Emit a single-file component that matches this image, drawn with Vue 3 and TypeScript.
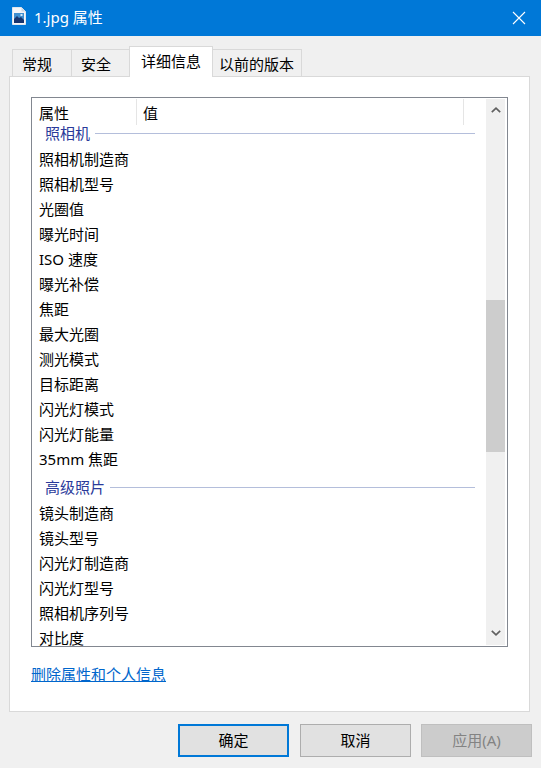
<script setup lang="ts">
const tabs = [
  { label: '常规', cls: 'tab-a' },
  { label: '安全', cls: 'tab-b' },
  { label: '详细信息', cls: 'tab-active' },
  { label: '以前的版本', cls: 'tab-d' },
]
const groups = [
  {
    title: '照相机',
    cls: 'group-first',
    rows: ['照相机制造商', '照相机型号', '光圈值', '曝光时间', 'ISO 速度', '曝光补偿', '焦距', '最大光圈', '测光模式', '目标距离', '闪光灯模式', '闪光灯能量', '35mm 焦距'],
  },
  {
    title: '高级照片',
    cls: 'group-next',
    rows: ['镜头制造商', '镜头型号', '闪光灯制造商', '闪光灯型号', '照相机序列号', '对比度'],
  },
]
</script>

<template>
  <div class="win">
    <header class="titlebar">
      <svg class="file-icon" width="16" height="20" viewBox="0 0 16 20">
        <path d="M1.5 1.5h9l4 4v13h-13z" fill="#f4f6f9" stroke="#dfe6ee" />
        <path d="M10.5 1.5v4h4" fill="#cfd8e3" />
        <rect x="3" y="7" width="10" height="10" fill="#3f8fd0" />
        <path d="M3 17v-4l3-3 2 2 2-1 3 3v3z" fill="#17346e" />
        <rect x="9.5" y="8" width="2" height="2" fill="#d5e8f6" />
      </svg>
      <span class="title">1.jpg 属性</span>
      <svg class="close" width="14" height="14" viewBox="0 0 14 14">
        <path d="M1 1l12 12M13 1L1 13" stroke="#fff" stroke-width="1.1" fill="none" />
      </svg>
    </header>

    <nav class="tabs">
      <div v-for="t in tabs" :key="t.label" class="tab" :class="t.cls">{{ t.label }}</div>
    </nav>

    <section class="panel">
      <div class="list">
        <div class="content">
          <div class="head">
            <div class="col-name"><span>属性</span></div>
            <div class="col-value"><span>值</span></div>
          </div>
          <div v-for="g in groups" :key="g.title">
            <div class="group" :class="g.cls">
              <span class="group-title">{{ g.title }}</span>
              <span class="group-line"></span>
            </div>
            <div v-for="r in g.rows" :key="r" class="row">{{ r }}</div>
          </div>
        </div>
        <div class="scrollbar">
          <svg class="arrow" width="10" height="6" viewBox="0 0 10 6">
            <path d="M0.8 5.2L5 1.2l4.2 4" stroke="#606060" stroke-width="1.7" fill="none" />
          </svg>
          <div class="track"><div class="thumb"></div></div>
          <svg class="arrow" width="10" height="6" viewBox="0 0 10 6">
            <path d="M0.8 0.8L5 4.8l4.2-4" stroke="#606060" stroke-width="1.7" fill="none" />
          </svg>
        </div>
      </div>
      <a class="link" href="#">删除属性和个人信息</a>
    </section>

    <footer class="actions">
      <button class="btn btn-default">确定</button>
      <button class="btn">取消</button>
      <button class="btn btn-disabled">应用(A)</button>
    </footer>
  </div>
</template>

<style scoped>
.win {
  width: 541px;
  height: 768px;
  background: #f0f0f0;
  display: flex;
  flex-direction: column;
  overflow: hidden;
  font-family: "Noto Sans", "Noto Sans CJK SC", sans-serif;
  font-size: 15px;
  color: #000;
}
.titlebar {
  height: 36px;
  flex: none;
  background: #0078d7;
  color: #fff;
  display: flex;
  align-items: center;
  padding: 0 15px 0 11px;
}
.file-icon { flex: none; margin-top: -4px; }
.title { margin-left: 7px; flex: 1; margin-top: -2px; line-height: 20px; }
.close { flex: none; }

.tabs {
  display: flex;
  align-items: flex-end;
  height: 40px;
  flex: none;
  padding-left: 12px;
}
.tab {
  height: 27px;
  box-sizing: border-box;
  border: 1px solid #d9d9d9;
  border-bottom: 0;
  background: #f0f0f0;
  display: flex;
  align-items: center;
  line-height: 20px;
  margin-left: -1px;
  padding-top: 2px;
  padding-left: 9px;
}
.tab-a { width: 60px; margin-left: 0; }
.tab-b { width: 59px; }
.tab-active {
  width: 84px;
  height: 31px;
  background: #fff;
  position: relative;
  z-index: 1;
  margin-bottom: -1px;
  padding-top: 0;
  padding-bottom: 3px;
  padding-left: 11px;
}
.tab-d { width: 90px; padding-left: 6px; }

.panel {
  box-sizing: border-box;
  margin: 0 11px 0 9px;
  height: 636px;
  flex: none;
  background: #fff;
  border: 1px solid #d9d9d9;
  padding: 20px 21px 0;
}
.list {
  box-sizing: border-box;
  height: 550px;
  border: 1px solid #828790;
  display: flex;
  overflow: hidden;
}
.content {
  flex: 1;
  min-width: 0;
  overflow: hidden;
}
.head {
  display: flex;
  height: 27px;
  padding-top: 1px;
  box-sizing: border-box;
  line-height: 28px;
}
.col-name {
  width: 105px;
  padding-left: 7px;
  box-sizing: border-box;
  border-right: 1px solid #e5e5e5;
}
.col-value {
  flex: 1;
  padding-left: 6px;
  margin-right: 22px;
  border-right: 1px solid #e5e5e5;
}
.group {
  display: flex;
  align-items: center;
  padding-left: 13px;
  padding-right: 11px;
  height: 16px;
  color: #2a3a9a;
  line-height: 16px;
}
.group-first { margin-bottom: 6px; }
.group-next { margin-top: 7px; margin-bottom: 6px; }
.group-title { flex: none; }
.group-line {
  flex: 1;
  height: 1px;
  background: #b4bedb;
  margin-left: 5px;
}
.row {
  height: 25px;
  line-height: 25px;
  padding-left: 7px;
  white-space: nowrap;
}
.scrollbar {
  width: 19px;
  flex: none;
  background: #f0f0f0;
  display: flex;
  flex-direction: column;
  align-items: center;
  margin: 1px 2px 1px 0;
}
.arrow { flex: none; margin: 8px 0 9px; }
.track { flex: 1; width: 100%; }
.thumb {
  height: 152px;
  margin-top: 178px;
  background: #cdcdcd;
}
.link {
  display: block;
  margin-top: 17px;
  width: max-content;
  color: #0066cc;
  line-height: 20px;
  text-decoration: underline;
}
.actions {
  display: flex;
  justify-content: flex-end;
  gap: 10px;
  padding-right: 9px;
  margin-top: 12px;
}
.btn {
  width: 111px;
  height: 33px;
  box-sizing: border-box;
  border: 1px solid #adadad;
  background: #e1e1e1;
  font: inherit;
  color: #000;
  padding: 0 0 2px;
}
.btn-default { border: 2px solid #0078d7; margin-right: 1px; }
.btn-disabled {
  background: #cccccc;
  border-color: #bfbfbf;
  color: #838383;
}
</style>
